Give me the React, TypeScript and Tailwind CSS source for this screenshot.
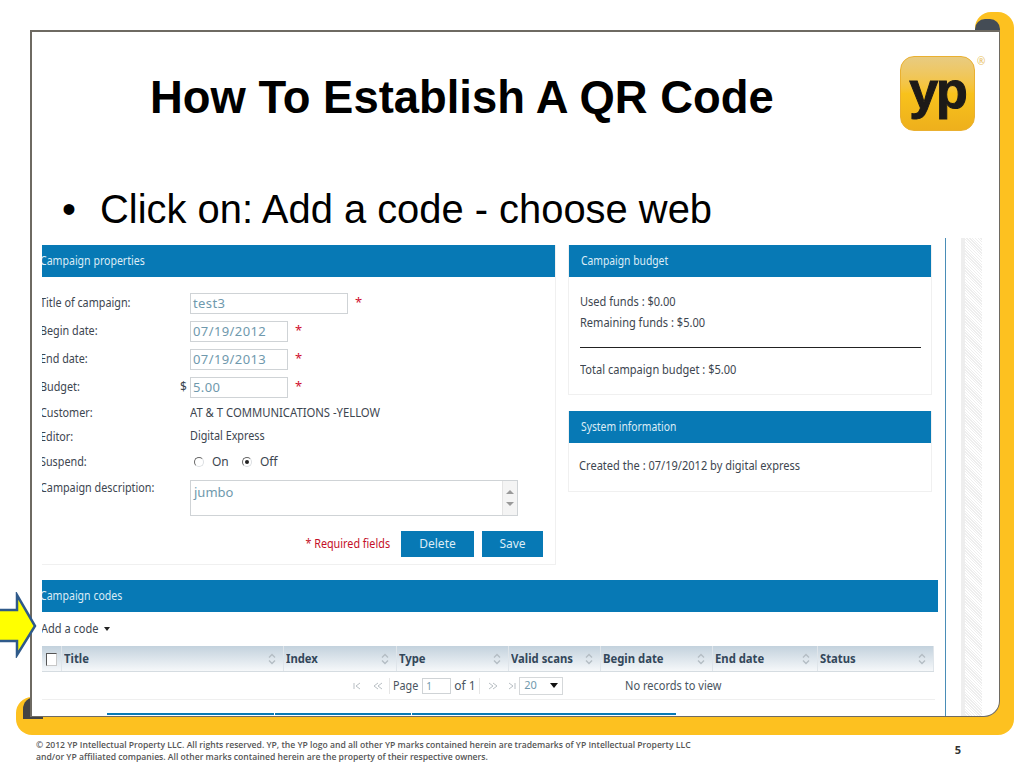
const ui = { fontFamily: '"Noto Sans", sans-serif' };
const arial = { fontFamily: '"Liberation Sans", Arial, sans-serif' };

const headBg = 'bg-gradient-to-b from-[#c3d2dd] to-[#f6f8fa]';

function PanelHeader({ title, clip }: { title: string; clip?: boolean }) {
  return (
    <div className="flex h-[32px] items-center overflow-hidden bg-[#0779b5] text-[12px] text-[#dcecf5]">
      <span className={clip ? '-ml-[2px] origin-left scale-x-[0.88] whitespace-nowrap' : 'ml-[12px] origin-left scale-x-[0.86] whitespace-nowrap'}>{title}</span>
    </div>
  );
}

function Label({ children }: { children: string }) {
  return (
    <div className="w-[138px] overflow-hidden whitespace-nowrap text-[12px] text-[#3d4650]">
      <span className="-ml-[2px] inline-block origin-left scale-x-90">{children}</span>
    </div>
  );
}

function Star() {
  return <span className="ml-[7px] text-[13px] text-[#d0102f]">*</span>;
}

function InputRow({ label, value, wide, prefix }: { label: string; value: string; wide?: boolean; prefix?: string }) {
  return (
    <div className="flex h-[28px] items-center">
      <Label>{label}</Label>
      <div className="w-[10px] text-[12px] text-[#3d4650]">{prefix}</div>
      <div className={`${wide ? 'w-[158px]' : 'w-[98px]'} h-[21px] border border-[#cfd3d6] pl-[2px] text-[13px] leading-[19px] tracking-[0.4px] text-[#6f99ad]`}>
        {value}
      </div>
      <Star />
    </div>
  );
}

function SortIcon() {
  return (
    <svg width="8" height="12" viewBox="0 0 8 12" className="shrink-0">
      <path d="M1 4.5 L4 1.5 L7 4.5" fill="none" stroke="#b4bdc4" strokeWidth="1.4" />
      <path d="M1 7.5 L4 10.5 L7 7.5" fill="none" stroke="#b4bdc4" strokeWidth="1.4" />
    </svg>
  );
}

function Radio({ on }: { on?: boolean }) {
  return (
    <span className="flex h-[10px] w-[10px] items-center justify-center rounded-full border border-[#dcdfe2] border-l-[#666] border-t-[#666]">
      {on && <span className="h-[4px] w-[4px] rounded-full bg-[#222]" />}
    </span>
  );
}

const columns = [
  { title: 'Title', w: 'w-[222px]' },
  { title: 'Index', w: 'w-[113px]' },
  { title: 'Type', w: 'w-[112px]' },
  { title: 'Valid scans', w: 'w-[92px]' },
  { title: 'Begin date', w: 'w-[112px]' },
  { title: 'End date', w: 'w-[105px]' },
  { title: 'Status', w: 'w-[116px]' },
];

function PagerIcon({ d }: { d: string }) {
  return (
    <svg width="10" height="8" viewBox="0 0 10 8" className="shrink-0">
      <path d={d} fill="none" stroke="#b9bfc4" strokeWidth="1" />
    </svg>
  );
}

function Form() {
  return (
    <div className="h-[320px] w-[514px] border-b border-r border-[#f0f0f0]">
      <PanelHeader title="Campaign properties" clip />
      <div className="pt-[12px]">
        <InputRow label="Title of campaign:" value="test3" wide />
        <InputRow label="Begin date:" value="07/19/2012" />
        <InputRow label="End date:" value="07/19/2013" />
        <InputRow label="Budget:" value="5.00" prefix="$" />
        <div className="flex h-[24px] items-center">
          <Label>Customer:</Label>
          <div className="w-[10px]" />
          <span className="origin-left scale-x-[0.94] whitespace-nowrap text-[12px] text-[#3d4650]">AT &amp; T COMMUNICATIONS -YELLOW</span>
        </div>
        <div className="flex h-[24px] items-center">
          <Label>Editor:</Label>
          <div className="w-[10px]" />
          <span className="-mt-[2px] origin-left scale-x-90 whitespace-nowrap text-[12px] text-[#3d4650]">Digital Express</span>
        </div>
        <div className="flex h-[26px] items-center">
          <Label>Suspend:</Label>
          <div className="w-[10px]" />
          <div className="flex items-center pl-[4px] text-[12px] text-[#3d4650]">
            <Radio />
            <span className="ml-[8px] w-[30px]">On</span>
            <Radio on />
            <span className="ml-[8px]">Off</span>
          </div>
        </div>
        <div className="mt-[5px] flex">
          <div className="-mt-[1px]"><Label>Campaign description:</Label></div>
          <div className="w-[10px]" />
          <div className="flex h-[36px] w-[328px] border border-[#cfd3d6] text-[13px] text-[#6f99ad]">
            <span className="flex-1 pl-[3px] leading-[22px]">jumbo</span>
            <div className="flex w-[15px] flex-col items-center justify-between border-l border-[#e4e4e4] bg-[#f4f4f4] py-[9px]">
              <span className="h-0 w-0 border-x-[4px] border-b-[4px] border-x-transparent border-b-[#9a9a9a]" />
              <span className="h-0 w-0 border-x-[4px] border-t-[4px] border-x-transparent border-t-[#9a9a9a]" />
            </div>
          </div>
        </div>
        <div className="mt-[15px] flex items-center justify-end pr-[12px]">
          <span className="mr-[11px] origin-right scale-x-90 whitespace-nowrap text-[12px] text-[#c40f28]">* Required fields</span>
          <button className="h-[26px] w-[73px] bg-[#0779b5] text-[12px] text-[#dcecf5]">Delete</button>
          <button className="ml-[8px] h-[26px] w-[61px] bg-[#0779b5] text-[12px] text-[#dcecf5]">Save</button>
        </div>
      </div>
    </div>
  );
}

function Sidebar() {
  return (
    <div className="ml-[12px] w-[364px]">
      <div className="h-[150px] border-b border-x border-[#f0f0f0]">
        <PanelHeader title="Campaign budget" />
        <div className="px-[11px] pt-[16px] text-[12px] text-[#3d4650]">
          <p className="h-[21px] origin-left scale-x-[0.92] whitespace-nowrap">Used funds : $0.00</p>
          <p className="h-[21px] origin-left scale-x-[0.92] whitespace-nowrap">Remaining funds : $5.00</p>
          <div className="mt-[12px] h-px w-[341px] bg-[#222]" />
          <p className="mt-[13px] origin-left scale-x-[0.92] whitespace-nowrap">Total campaign budget : $5.00</p>
        </div>
      </div>
      <div className="mt-[16px] h-[81px] border-b border-x border-[#f0f0f0]">
        <PanelHeader title="System information" />
        <p className="origin-left scale-x-[0.92] whitespace-nowrap px-[11px] pt-[14px] text-[12px] text-[#3d4650]">Created the : 07/19/2012 by digital express</p>
      </div>
    </div>
  );
}

function CodesTable() {
  return (
    <div className="mt-[15px] w-[896px]">
      <PanelHeader title="Campaign codes" clip />
      <div className="flex h-[34px] items-center overflow-hidden text-[12px] text-[#3d4650]">
        <span className="-ml-[1px] origin-left scale-x-[0.92] whitespace-nowrap">Add a code</span>
        <span className="h-0 w-0 border-x-[3.5px] border-t-[4px] border-x-transparent border-t-[#222]" />
      </div>
      <div className={`flex h-[26px] w-[892px] items-center border-b border-[#d5dce1] ${headBg}`}>
        <div className="flex h-full w-[20px] items-center justify-center border-r border-[#dfe5ea]">
          <span className="mt-[2px] h-[13px] w-[11px] border border-[#c8c8c8] border-l-[#555] border-t-[#555] bg-white" />
        </div>
        {columns.map((c) => (
          <div key={c.title} className={`${c.w} flex h-full items-center justify-between border-r border-[#dfe5ea] pl-[2px] pr-[7px] text-[12px] font-bold text-[#33475a]`}>
            <span className="origin-left scale-x-[0.94] whitespace-nowrap">{c.title}</span>
            <SortIcon />
          </div>
        ))}
      </div>
      <div className="flex h-[28px] w-[893px] items-center border-b border-[#efefef] text-[12px] text-[#4a5560]">
        <div className="ml-[311px] flex w-[37px] items-center gap-[10px] border-r border-[#e6e6e6] py-[4px]">
          <PagerIcon d="M1 1 V7 M7 1 L3 4 L7 7" />
          <PagerIcon d="M5 1 L1 4 L5 7 M9 1 L5 4 L9 7" />
        </div>
        <span className="ml-[3px] origin-left scale-x-90 whitespace-nowrap">Page</span>
        <span className="ml-[1px] h-[16px] w-[29px] border border-[#cfd3d6] pl-[3px] text-[10px] leading-[14px] text-[#6f99ad]">1</span>
        <span className="ml-[3px] w-[24px] whitespace-nowrap">of 1</span>
        <div className="ml-[1px] flex items-center gap-[8px] border-l border-[#e6e6e6] py-[4px] pl-[8px]">
          <PagerIcon d="M1 1 L5 4 L1 7 M5 1 L9 4 L5 7" />
          <PagerIcon d="M3 1 L7 4 L3 7 M9 1 V7" />
        </div>
        <div className="ml-[3px] flex h-[18px] w-[44px] items-center justify-between border border-[#d5d8da] px-[4px] text-[11px] text-[#6f99ad]">
          <span>20</span>
          <span className="h-0 w-0 border-x-[4px] border-t-[5px] border-x-transparent border-t-[#111]" />
        </div>
        <span className="ml-[62px] origin-left scale-x-[0.92] whitespace-nowrap">No records to view</span>
      </div>
      <div className="ml-[65px] mt-[13px] flex h-[2px] w-[569px] justify-between bg-[#0779b5] pl-[167px] pr-[264px]">
        <span className="h-full w-px bg-white" />
        <span className="h-full w-px bg-white" />
      </div>
    </div>
  );
}

export default function App() {
  return (
    <div className="relative h-[768px] w-[1024px] overflow-hidden bg-white" style={ui}>
      {/* yellow frame behind the slide */}
      <div className="absolute left-[16px] top-[697px] h-[38px] w-[998px] rounded-b-[16px] rounded-tl-[16px] bg-[#fdc120]" />
      <div className="absolute left-[975px] top-[12px] h-[700px] w-[39px] rounded-t-[16px] bg-[#fdc120]" />
      <div className="absolute left-[23px] top-[697px] h-[22px] w-[20px] rounded-tl-[12px] bg-[#444]" />
      <div className="absolute left-[975px] top-[19px] h-[20px] w-[25px] rounded-t-[10px] bg-[#444c55]" />

      <div className="relative ml-[30px] mt-[30px] h-[687px] w-[970px] overflow-hidden rounded-br-[16px] border border-l-2 border-t-2 border-[#6e6a62] bg-white">
        <h1 className="h-[128px] pl-[118px] pt-[33px] text-[45.4px] font-bold leading-[66px] text-black" style={arial}>
          How To Establish A QR Code
        </h1>
        <div className="flex h-[78px] items-start pl-[30px] pt-[26px] text-[39.9px] leading-[46px] text-black" style={arial}>
          <span className="w-[38px]">•</span>
          <span>Click on: Add a code - choose web</span>
        </div>
        <div className="flex h-[480px]">
          <div className="h-full w-[914px] border-r border-[#4a8db7] pl-[10px] pt-[7px]">
            <div className="flex">
              <Form />
              <Sidebar />
            </div>
            <CodesTable />
          </div>
          <div className="ml-[15px] h-full w-[21px] border-l-4 border-[#eeeeee] bg-[repeating-linear-gradient(45deg,#eeeeee_0,#eeeeee_1px,#ffffff_1px,#ffffff_2px)]" />
        </div>
      </div>

      {/* logo */}
      <div className="absolute left-[900px] top-[56px] flex h-[75px] w-[75px] items-center justify-center rounded-[14px] border border-[#eab030] bg-gradient-to-b from-[#e8cb80] via-[#f8c21c] to-[#eeb01c]">
        <span className="-mt-[8px] text-[52px] font-bold leading-none tracking-[-2px] text-[#1d1a18] [-webkit-text-stroke:1px_#1d1a18]" style={arial}>yp</span>
      </div>
      <span className="absolute left-[977px] top-[54px] text-[10px] text-[#e8c060]">®</span>

      {/* arrow pointing at Add a code */}
      <svg className="absolute left-0 top-[592px]" width="38" height="66" viewBox="0 0 38 66">
        <path d="M-2 18 H17 V3 L35 34 L17 63 V49 H-2 Z" fill="#ffff00" stroke="#2f5a8a" strokeWidth="2.5" />
      </svg>

      {/* footer */}
      <footer className="ml-[36px] mt-[22px] flex w-[925px] justify-between text-[8.6px] font-semibold leading-[12px] text-[#555]" style={{ fontFamily: '"Open Sans", sans-serif' }}>
        <p className="w-[680px] whitespace-nowrap">
          © 2012 YP Intellectual Property LLC. All rights reserved. YP, the YP logo and all other YP marks contained herein are trademarks of YP Intellectual Property LLC<br />
          and/or YP affiliated companies. All other marks contained herein are the property of their respective owners.
        </p>
        <span className="mt-[5px] text-[11px] font-bold text-[#333]">5</span>
      </footer>
    </div>
  );
}
